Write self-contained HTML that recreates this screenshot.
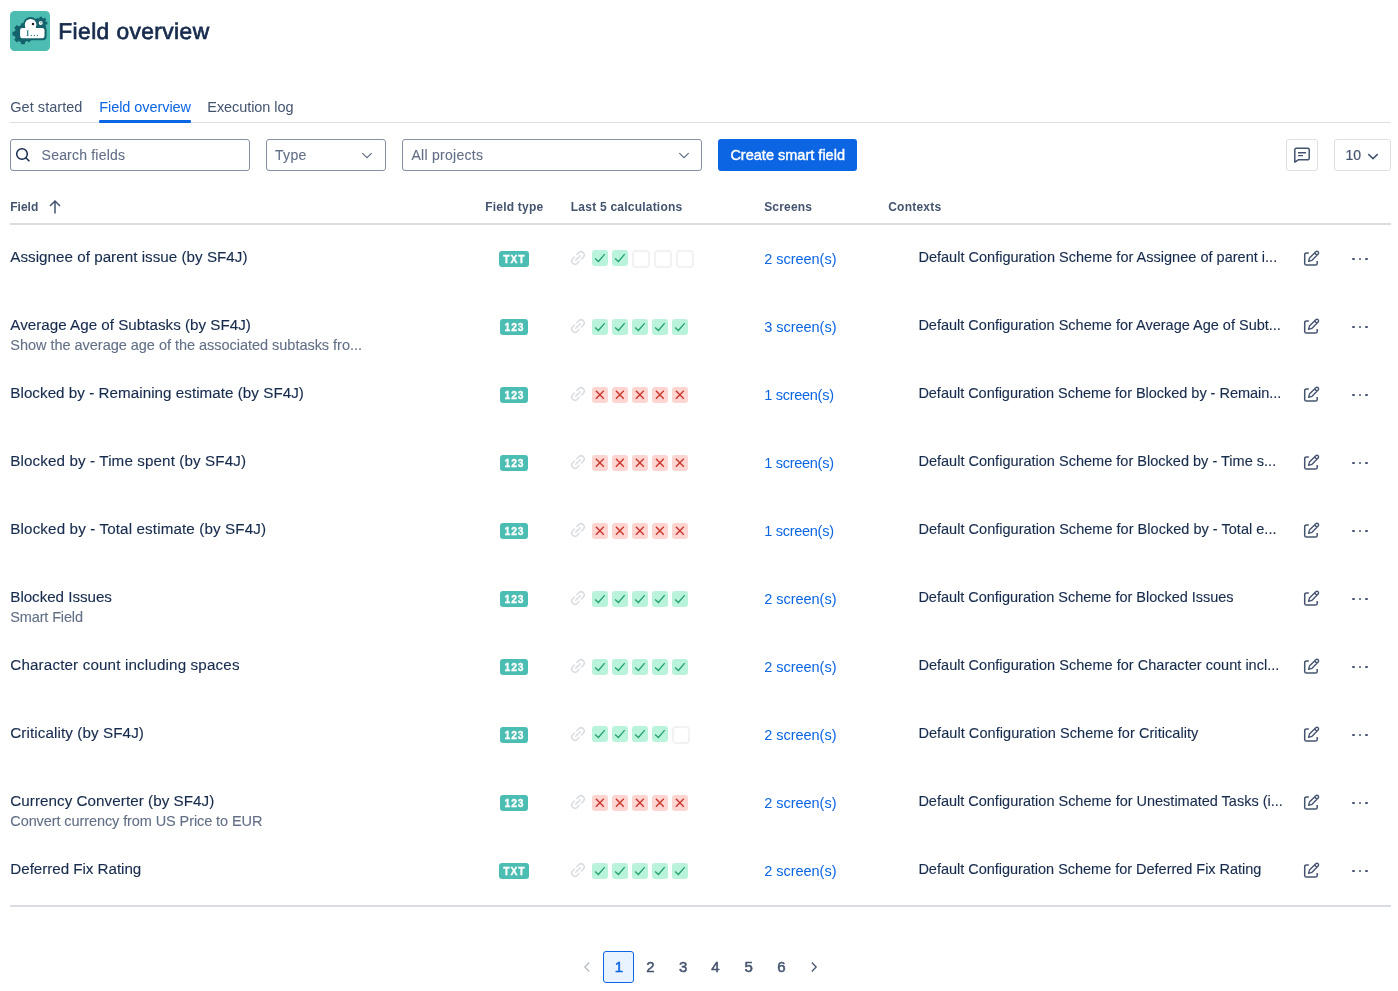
<!DOCTYPE html>
<html lang="en">
<head>
<meta charset="utf-8">
<title>Field overview</title>
<style>
*{box-sizing:border-box;margin:0;padding:0}
html,body{width:1398px;height:991px;background:#fff;overflow:hidden}
body{position:relative;will-change:transform;font-family:"Liberation Sans",sans-serif;color:#172b4d;-webkit-font-smoothing:antialiased}
span,div,svg,i{position:absolute;display:block}
span{white-space:nowrap}
svg{overflow:visible}
.logo{left:10px;top:11px;width:40px;height:40px;border-radius:4.5px;background:#4dbdb2;overflow:hidden}
.h1{top:15.4px;font-size:22.8px;line-height:32px;font-weight:400;color:#172b4d;-webkit-text-stroke:.7px #172b4d;text-rendering:geometricPrecision}
.tab{top:97px;font-size:14.5px;line-height:20px;color:#44546f}
.tab.on{color:#0c66e4}
.tabline{left:10px;top:122px;width:1381px;height:1px;background:#dcdfe4}
.tabsel{left:99px;top:120px;width:92px;height:3px;background:#0c66e4;border-radius:1px}
.box{top:139px;height:32px;border:1px solid #8590a2;border-radius:3px;background:#fff}
.box.lt{border-color:#dcdfe4}
.ph{top:145px;font-size:14px;line-height:20px;color:#626f86;-webkit-text-stroke:.1px #626f86}
.btn{left:718px;top:139px;width:139px;height:32px;border-radius:3px;background:#0c66e4}
.btnt{top:145px;font-size:14.5px;line-height:20px;font-weight:400;color:#fff;-webkit-text-stroke:.4px #fff}
.ten{top:145px;font-size:14px;line-height:20px;color:#44546f;-webkit-text-stroke:.2px #44546f}
.th{top:199px;font-size:12px;line-height:16px;font-weight:700;color:#44546f}
.hline{left:10px;width:1381px;height:2px;background:#dadde3}
.row{left:0;width:1398px;height:68px}
.nm{top:22.1px;-webkit-text-stroke:.12px #172b4d;font-size:15.2px;line-height:20px;color:#172b4d}
.ds{top:42px;-webkit-text-stroke:.1px #626f86;font-size:14.5px;line-height:20px;color:#626f86}
.cx{top:22px;-webkit-text-stroke:.12px #172b4d;font-size:14.5px;line-height:20px;color:#172b4d}
.sc{top:24px;font-size:14.5px;line-height:20px;color:#0c66e4}
.bd{top:26px;height:16px;border-radius:3px;background:#4bbdb2;color:#fff;font-size:10.3px;line-height:18px;font-weight:700;text-align:center;letter-spacing:.9px;text-indent:.9px;-webkit-text-stroke:.3px #fff}
.bd.t{left:499px;width:30px}
.bd.n{left:500px;width:28px}
.lk{left:570px;top:25px;width:16px;height:16px;color:#d9dce3}
.sq{top:26px;width:16px;height:16px;border-radius:3px}
.sq svg{left:0;top:0;width:16px;height:16px}
.sq.g{background:#baf3db;color:#22a06b}
.sq.r{background:#ffd5d2;color:#c9372c}
.sq.e{width:18px;height:18px;background:#fff;border:2px solid #f1f2f4;border-radius:4px}
.e1 .sq{top:25px}
.ed{left:1303px;top:25px;width:17px;height:17px;color:#44546f}
.dots{left:1352px;top:32.7px;width:16px;height:3px}
.dots i{top:-.1px;width:2.8px;height:2.8px;border-radius:50%;background:#44546f}
.dots i:nth-child(1){left:0.1px}.dots i:nth-child(2){left:6.7px}.dots i:nth-child(3){left:13.2px}
.pg{top:957px;font-size:15px;line-height:20px;font-weight:400;color:#44546f;-webkit-text-stroke:.5px}
.pgsel{left:603px;top:951px;width:31px;height:32px;border:1px solid #0c66e4;border-radius:3px;background:#e9f2ff}
</style>
</head>
<body>
<svg width="0" height="0" style="left:0;top:0">
<defs>
<symbol id="i-link" viewBox="0 0 16 16"><path fill="currentColor" fill-rule="evenodd" d="M8.22 2.22a3.932 3.932 0 1 1 5.56 5.56l-2.25 2.25-1.06-1.06 2.25-2.25a2.432 2.432 0 0 0-3.44-3.44L7.03 5.53 5.97 4.47zm3.06 3.56-5.5 5.5-1.06-1.06 5.5-5.5zM2.22 8.22l2.25-2.25 1.06 1.06-2.25 2.25a2.432 2.432 0 0 0 3.44 3.44l2.25-2.25 1.06 1.06-2.25 2.25a3.932 3.932 0 1 1-5.56-5.56" clip-rule="evenodd"/></symbol>
<symbol id="i-ok" viewBox="0 0 16 16"><path fill="none" stroke="currentColor" stroke-width="1.25" d="M3.1 8.5l3.3 3 6.3-7.3"/></symbol>
<symbol id="i-no" viewBox="0 0 16 16"><path fill="none" stroke="currentColor" stroke-width="1.4" d="M3.9 3.8l7.9 7.9M11.8 3.8l-7.9 7.9"/></symbol>
<symbol id="i-edit" viewBox="0 0 17 17"><path fill="none" stroke="currentColor" stroke-width="1.5" stroke-linejoin="round" d="M5.8 2.9H3.4a1.7 1.7 0 0 0-1.7 1.7v8.8a1.7 1.7 0 0 0 1.7 1.7h9.1a1.7 1.7 0 0 0 1.7-1.7V10.9"/><path fill="none" stroke="currentColor" stroke-width="1.4" stroke-linejoin="round" d="M5.6 11.4l.9-3.3 6.3-6.3a1.55 1.55 0 0 1 2.3 2.3L8.8 10.4zM11.6 3l2.3 2.3"/></symbol>
<symbol id="i-chev" viewBox="0 0 12 8"><path fill="none" stroke="currentColor" stroke-width="1.15" d="M1.3 2.2L6 6.7l4.7-4.5"/></symbol>
</defs>
</svg>

<!-- header -->
<div class="logo"><svg viewBox="0 0 40 40" width="40" height="40" style="left:0;top:0"><path fill="#14636c" d="M21.12 20.52L23.33 20.80L23.33 24.60L21.12 24.88L20.25 26.97L21.62 28.73L18.93 31.42L17.17 30.05L15.08 30.92L14.80 33.13L11.00 33.13L10.72 30.92L8.63 30.05L6.87 31.42L4.18 28.73L5.55 26.97L4.68 24.88L2.47 24.60L2.47 20.80L4.68 20.52L5.55 18.43L4.18 16.67L6.87 13.98L8.63 15.35L10.72 14.48L11.00 12.27L14.80 12.27L15.08 14.48L17.17 15.35L18.93 13.98L21.62 16.67L20.25 18.43Z"/><path fill="#14636c" d="M35.80 10.68L37.37 10.81L37.37 13.39L35.80 13.52L35.37 14.56L36.39 15.77L34.57 17.59L33.36 16.57L32.32 17.00L32.19 18.57L29.61 18.57L29.48 17.00L28.44 16.57L27.23 17.59L25.41 15.77L26.43 14.56L26.00 13.52L24.43 13.39L24.43 10.81L26.00 10.68L26.43 9.64L25.41 8.43L27.23 6.61L28.44 7.63L29.48 7.20L29.61 5.63L32.19 5.63L32.32 7.20L33.36 7.63L34.57 6.61L36.39 8.43L35.37 9.64Z"/><circle cx="20.6" cy="13.5" r="7.5" fill="#14636c"/><rect x="8.5" y="15.3" width="28.1" height="13.9" rx="4" fill="#14636c"/><circle cx="20.6" cy="13.7" r="5.8" fill="#fff"/><rect x="10.1" y="17.1" width="24.4" height="10.2" rx="2.2" fill="#fff"/><rect x="15.4" y="15" width="10.4" height="4" fill="#fff"/><circle cx="30.7" cy="12.1" r="2" fill="#fff"/><path d="M30.9 10.6v1.9" stroke="#14636c" stroke-width=".7" fill="none"/><circle cx="23" cy="12.9" r="1.25" fill="#1d1d26"/><text style="text-rendering:geometricPrecision" x="16.1" y="24.9" font-family="Liberation Serif, serif" font-weight="700" font-size="8.4" fill="#3f8790" letter-spacing=".9">I...</text></svg></div>
<span class="h1" style="left:58.3px;letter-spacing:0.392px">Field overview</span>

<!-- tabs -->
<span class="tab" style="left:10.3px;letter-spacing:0.037px">Get started</span>
<span class="tab on" style="left:99.3px;letter-spacing:-0.075px">Field overview</span>
<span class="tab" style="left:207.3px;letter-spacing:-0.072px">Execution log</span>
<div class="tabline"></div>
<div class="tabsel"></div>

<!-- toolbar -->
<div class="box" style="left:10px;width:240px"></div>
<svg style="left:14px;top:146px;width:18px;height:18px;color:#172b4d" viewBox="0 0 18 18"><circle cx="8" cy="8" r="5.3" fill="none" stroke="currentColor" stroke-width="1.5"/><path d="M11.8 11.8l3.6 3.5" fill="none" stroke="currentColor" stroke-width="1.5"/></svg>
<span class="ph" style="left:41.6px;letter-spacing:0.205px">Search fields</span>
<div class="box" style="left:266px;width:120px"></div>
<span class="ph" style="left:275px;letter-spacing:0.314px">Type</span>
<svg style="left:361px;top:151px;width:12px;height:8px;color:#5e6c84" viewBox="0 0 12 8"><use href="#i-chev"/></svg>
<div class="box" style="left:402px;width:300px"></div>
<span class="ph" style="left:411.5px;letter-spacing:0.276px">All projects</span>
<svg style="left:678px;top:151px;width:12px;height:8px;color:#5e6c84" viewBox="0 0 12 8"><use href="#i-chev"/></svg>
<div class="btn"></div>
<span class="btnt" style="left:730.4px;letter-spacing:0.010px">Create smart field</span>
<div class="box lt" style="left:1286px;width:32px"></div>
<svg style="left:1293px;top:146px;width:18px;height:18px;color:#44546f" viewBox="0 0 18 18"><path fill="none" stroke="currentColor" stroke-width="1.5" stroke-linejoin="round" d="M1.8 3.7a1.5 1.5 0 0 1 1.5-1.5h11.4a1.5 1.5 0 0 1 1.5 1.5v8.6a1.5 1.5 0 0 1-1.5 1.5H5.3l-3.5 2.4z"/><path fill="none" stroke="currentColor" stroke-width="1.4" d="M5 6.7h8M5 9.6h5"/></svg>
<div class="box lt" style="left:1334px;width:57px"></div>
<span class="ten" style="left:1345.5px;letter-spacing:-0.078px">10</span>
<svg style="left:1367px;top:151.5px;width:12px;height:8px;color:#44546f" viewBox="0 0 12 8"><path fill="none" stroke="currentColor" stroke-width="1.5" d="M1.3 2.1L6 6.6l4.7-4.5"/></svg>

<!-- table head -->
<span class="th" style="left:10.3px;letter-spacing:-0.004px">Field</span>
<svg style="left:48px;top:199px;width:14px;height:16px;color:#44546f" viewBox="0 0 14 16"><path fill="none" stroke="currentColor" stroke-width="1.5" d="M7 14.5V2.2M2 7l5-5 5 5"/></svg>
<span class="th" style="left:485.2px;letter-spacing:0.220px">Field type</span>
<span class="th" style="left:570.8px;letter-spacing:0.224px">Last 5 calculations</span>
<span class="th" style="left:764.2px;letter-spacing:0.183px">Screens</span>
<span class="th" style="left:888.2px;letter-spacing:0.237px">Contexts</span>
<div class="hline" style="top:223px"></div>

<!-- rows -->
<div class="row e1" style="top:225px">
<span class="nm" style="left:10.3px;letter-spacing:0.025px">Assignee of parent issue (by SF4J)</span>
<span class="bd t">TXT</span>
<svg class="lk" viewBox="0 0 16 16"><use href="#i-link"/></svg>
<span class="sq g" style="left:592px"><svg viewBox="0 0 16 16"><use href="#i-ok"/></svg></span>
<span class="sq g" style="left:612px"><svg viewBox="0 0 16 16"><use href="#i-ok"/></svg></span>
<span class="sq e" style="left:632px"></span>
<span class="sq e" style="left:654px"></span>
<span class="sq e" style="left:676px"></span>
<span class="sc" style="left:764.2px;letter-spacing:-0.023px">2 screen(s)</span>
<span class="cx" style="left:918.4px;letter-spacing:0.017px">Default Configuration Scheme for Assignee of parent i...</span>
<svg class="ed" viewBox="0 0 16 16"><use href="#i-edit"/></svg>
<span class="dots"><i></i><i></i><i></i></span>
</div>
<div class="row" style="top:293px">
<span class="nm" style="left:10.3px;letter-spacing:0.008px">Average Age of Subtasks (by SF4J)</span>
<span class="ds" style="left:10.3px;letter-spacing:-0.026px">Show the average age of the associated subtasks fro...</span>
<span class="bd n">123</span>
<svg class="lk" viewBox="0 0 16 16"><use href="#i-link"/></svg>
<span class="sq g" style="left:592px"><svg viewBox="0 0 16 16"><use href="#i-ok"/></svg></span>
<span class="sq g" style="left:612px"><svg viewBox="0 0 16 16"><use href="#i-ok"/></svg></span>
<span class="sq g" style="left:632px"><svg viewBox="0 0 16 16"><use href="#i-ok"/></svg></span>
<span class="sq g" style="left:652px"><svg viewBox="0 0 16 16"><use href="#i-ok"/></svg></span>
<span class="sq g" style="left:672px"><svg viewBox="0 0 16 16"><use href="#i-ok"/></svg></span>
<span class="sc" style="left:764.2px;letter-spacing:-0.023px">3 screen(s)</span>
<span class="cx" style="left:918.4px;letter-spacing:0.001px">Default Configuration Scheme for Average Age of Subt...</span>
<svg class="ed" viewBox="0 0 16 16"><use href="#i-edit"/></svg>
<span class="dots"><i></i><i></i><i></i></span>
</div>
<div class="row" style="top:361px">
<span class="nm" style="left:10.3px;letter-spacing:0.038px">Blocked by - Remaining estimate (by SF4J)</span>
<span class="bd n">123</span>
<svg class="lk" viewBox="0 0 16 16"><use href="#i-link"/></svg>
<span class="sq r" style="left:592px"><svg viewBox="0 0 16 16"><use href="#i-no"/></svg></span>
<span class="sq r" style="left:612px"><svg viewBox="0 0 16 16"><use href="#i-no"/></svg></span>
<span class="sq r" style="left:632px"><svg viewBox="0 0 16 16"><use href="#i-no"/></svg></span>
<span class="sq r" style="left:652px"><svg viewBox="0 0 16 16"><use href="#i-no"/></svg></span>
<span class="sq r" style="left:672px"><svg viewBox="0 0 16 16"><use href="#i-no"/></svg></span>
<span class="sc" style="left:764.2px;letter-spacing:-0.273px">1 screen(s)</span>
<span class="cx" style="left:918.4px;letter-spacing:-0.026px">Default Configuration Scheme for Blocked by - Remain...</span>
<svg class="ed" viewBox="0 0 16 16"><use href="#i-edit"/></svg>
<span class="dots"><i></i><i></i><i></i></span>
</div>
<div class="row" style="top:429px">
<span class="nm" style="left:10.3px;letter-spacing:0.115px">Blocked by - Time spent (by SF4J)</span>
<span class="bd n">123</span>
<svg class="lk" viewBox="0 0 16 16"><use href="#i-link"/></svg>
<span class="sq r" style="left:592px"><svg viewBox="0 0 16 16"><use href="#i-no"/></svg></span>
<span class="sq r" style="left:612px"><svg viewBox="0 0 16 16"><use href="#i-no"/></svg></span>
<span class="sq r" style="left:632px"><svg viewBox="0 0 16 16"><use href="#i-no"/></svg></span>
<span class="sq r" style="left:652px"><svg viewBox="0 0 16 16"><use href="#i-no"/></svg></span>
<span class="sq r" style="left:672px"><svg viewBox="0 0 16 16"><use href="#i-no"/></svg></span>
<span class="sc" style="left:764.2px;letter-spacing:-0.273px">1 screen(s)</span>
<span class="cx" style="left:918.4px;letter-spacing:0.014px">Default Configuration Scheme for Blocked by - Time s...</span>
<svg class="ed" viewBox="0 0 16 16"><use href="#i-edit"/></svg>
<span class="dots"><i></i><i></i><i></i></span>
</div>
<div class="row" style="top:497px">
<span class="nm" style="left:10.3px;letter-spacing:0.126px">Blocked by - Total estimate (by SF4J)</span>
<span class="bd n">123</span>
<svg class="lk" viewBox="0 0 16 16"><use href="#i-link"/></svg>
<span class="sq r" style="left:592px"><svg viewBox="0 0 16 16"><use href="#i-no"/></svg></span>
<span class="sq r" style="left:612px"><svg viewBox="0 0 16 16"><use href="#i-no"/></svg></span>
<span class="sq r" style="left:632px"><svg viewBox="0 0 16 16"><use href="#i-no"/></svg></span>
<span class="sq r" style="left:652px"><svg viewBox="0 0 16 16"><use href="#i-no"/></svg></span>
<span class="sq r" style="left:672px"><svg viewBox="0 0 16 16"><use href="#i-no"/></svg></span>
<span class="sc" style="left:764.2px;letter-spacing:-0.273px">1 screen(s)</span>
<span class="cx" style="left:918.4px;letter-spacing:0.024px">Default Configuration Scheme for Blocked by - Total e...</span>
<svg class="ed" viewBox="0 0 16 16"><use href="#i-edit"/></svg>
<span class="dots"><i></i><i></i><i></i></span>
</div>
<div class="row" style="top:565px">
<span class="nm" style="left:10.3px;letter-spacing:-0.043px">Blocked Issues</span>
<span class="ds" style="left:10.3px;letter-spacing:-0.144px">Smart Field</span>
<span class="bd n">123</span>
<svg class="lk" viewBox="0 0 16 16"><use href="#i-link"/></svg>
<span class="sq g" style="left:592px"><svg viewBox="0 0 16 16"><use href="#i-ok"/></svg></span>
<span class="sq g" style="left:612px"><svg viewBox="0 0 16 16"><use href="#i-ok"/></svg></span>
<span class="sq g" style="left:632px"><svg viewBox="0 0 16 16"><use href="#i-ok"/></svg></span>
<span class="sq g" style="left:652px"><svg viewBox="0 0 16 16"><use href="#i-ok"/></svg></span>
<span class="sq g" style="left:672px"><svg viewBox="0 0 16 16"><use href="#i-ok"/></svg></span>
<span class="sc" style="left:764.2px;letter-spacing:-0.023px">2 screen(s)</span>
<span class="cx" style="left:918.4px;letter-spacing:-0.016px">Default Configuration Scheme for Blocked Issues</span>
<svg class="ed" viewBox="0 0 16 16"><use href="#i-edit"/></svg>
<span class="dots"><i></i><i></i><i></i></span>
</div>
<div class="row" style="top:633px">
<span class="nm" style="left:10.3px;letter-spacing:0.149px">Character count including spaces</span>
<span class="bd n">123</span>
<svg class="lk" viewBox="0 0 16 16"><use href="#i-link"/></svg>
<span class="sq g" style="left:592px"><svg viewBox="0 0 16 16"><use href="#i-ok"/></svg></span>
<span class="sq g" style="left:612px"><svg viewBox="0 0 16 16"><use href="#i-ok"/></svg></span>
<span class="sq g" style="left:632px"><svg viewBox="0 0 16 16"><use href="#i-ok"/></svg></span>
<span class="sq g" style="left:652px"><svg viewBox="0 0 16 16"><use href="#i-ok"/></svg></span>
<span class="sq g" style="left:672px"><svg viewBox="0 0 16 16"><use href="#i-ok"/></svg></span>
<span class="sc" style="left:764.2px;letter-spacing:-0.023px">2 screen(s)</span>
<span class="cx" style="left:918.4px;letter-spacing:0.028px">Default Configuration Scheme for Character count incl...</span>
<svg class="ed" viewBox="0 0 16 16"><use href="#i-edit"/></svg>
<span class="dots"><i></i><i></i><i></i></span>
</div>
<div class="row e1" style="top:701px">
<span class="nm" style="left:10.3px;letter-spacing:0.098px">Criticality (by SF4J)</span>
<span class="bd n">123</span>
<svg class="lk" viewBox="0 0 16 16"><use href="#i-link"/></svg>
<span class="sq g" style="left:592px"><svg viewBox="0 0 16 16"><use href="#i-ok"/></svg></span>
<span class="sq g" style="left:612px"><svg viewBox="0 0 16 16"><use href="#i-ok"/></svg></span>
<span class="sq g" style="left:632px"><svg viewBox="0 0 16 16"><use href="#i-ok"/></svg></span>
<span class="sq g" style="left:652px"><svg viewBox="0 0 16 16"><use href="#i-ok"/></svg></span>
<span class="sq e" style="left:672px"></span>
<span class="sc" style="left:764.2px;letter-spacing:-0.023px">2 screen(s)</span>
<span class="cx" style="left:918.4px;letter-spacing:0.064px">Default Configuration Scheme for Criticality</span>
<svg class="ed" viewBox="0 0 16 16"><use href="#i-edit"/></svg>
<span class="dots"><i></i><i></i><i></i></span>
</div>
<div class="row" style="top:769px">
<span class="nm" style="left:10.3px;letter-spacing:0.053px">Currency Converter (by SF4J)</span>
<span class="ds" style="left:10.3px;letter-spacing:-0.093px">Convert currency from US Price to EUR</span>
<span class="bd n">123</span>
<svg class="lk" viewBox="0 0 16 16"><use href="#i-link"/></svg>
<span class="sq r" style="left:592px"><svg viewBox="0 0 16 16"><use href="#i-no"/></svg></span>
<span class="sq r" style="left:612px"><svg viewBox="0 0 16 16"><use href="#i-no"/></svg></span>
<span class="sq r" style="left:632px"><svg viewBox="0 0 16 16"><use href="#i-no"/></svg></span>
<span class="sq r" style="left:652px"><svg viewBox="0 0 16 16"><use href="#i-no"/></svg></span>
<span class="sq r" style="left:672px"><svg viewBox="0 0 16 16"><use href="#i-no"/></svg></span>
<span class="sc" style="left:764.2px;letter-spacing:-0.023px">2 screen(s)</span>
<span class="cx" style="left:918.4px;letter-spacing:-0.008px">Default Configuration Scheme for Unestimated Tasks (i...</span>
<svg class="ed" viewBox="0 0 16 16"><use href="#i-edit"/></svg>
<span class="dots"><i></i><i></i><i></i></span>
</div>
<div class="row" style="top:837px">
<span class="nm" style="left:10.3px;letter-spacing:-0.038px">Deferred Fix Rating</span>
<span class="bd t">TXT</span>
<svg class="lk" viewBox="0 0 16 16"><use href="#i-link"/></svg>
<span class="sq g" style="left:592px"><svg viewBox="0 0 16 16"><use href="#i-ok"/></svg></span>
<span class="sq g" style="left:612px"><svg viewBox="0 0 16 16"><use href="#i-ok"/></svg></span>
<span class="sq g" style="left:632px"><svg viewBox="0 0 16 16"><use href="#i-ok"/></svg></span>
<span class="sq g" style="left:652px"><svg viewBox="0 0 16 16"><use href="#i-ok"/></svg></span>
<span class="sq g" style="left:672px"><svg viewBox="0 0 16 16"><use href="#i-ok"/></svg></span>
<span class="sc" style="left:764.2px;letter-spacing:-0.023px">2 screen(s)</span>
<span class="cx" style="left:918.4px;letter-spacing:-0.022px">Default Configuration Scheme for Deferred Fix Rating</span>
<svg class="ed" viewBox="0 0 16 16"><use href="#i-edit"/></svg>
<span class="dots"><i></i><i></i><i></i></span>
</div>

<div class="hline" style="top:905px"></div>

<!-- pagination -->
<svg style="left:583px;top:961px;width:8px;height:12px;color:#b3b9c4" viewBox="0 0 8 12"><path fill="none" stroke="currentColor" stroke-width="1.2" d="M6.2 1.5L1.8 6l4.4 4.5"/></svg>
<div class="pgsel"></div>
<span class="pg" style="left:614.7px;color:#0c66e4;letter-spacing:-1.044px">1</span>
<span class="pg" style="left:646.2px;letter-spacing:-0.044px">2</span>
<span class="pg" style="left:678.9px;letter-spacing:0.056px">3</span>
<span class="pg" style="left:711.3px;letter-spacing:0.356px">4</span>
<span class="pg" style="left:744.6px;letter-spacing:0.056px">5</span>
<span class="pg" style="left:777.2px;letter-spacing:0.256px">6</span>
<svg style="left:810px;top:961px;width:8px;height:12px;color:#44546f" viewBox="0 0 8 12"><path fill="none" stroke="currentColor" stroke-width="1.25" d="M1.8 1.5L6.2 6l-4.4 4.5"/></svg>
</body>
</html>
